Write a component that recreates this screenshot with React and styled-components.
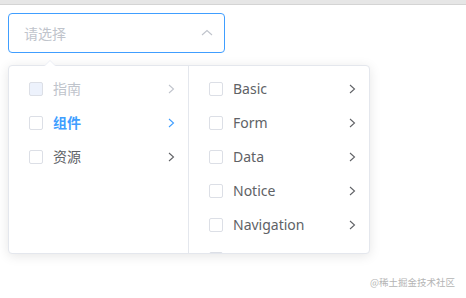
import styled, { createGlobalStyle } from "styled-components";

const GlobalStyle = createGlobalStyle`
  html, body {
    margin: 0;
    padding: 0;
    background: #fff;
  }
  body {
    font-family: "Noto Sans", "Noto Sans CJK SC", sans-serif;
  }
`;

const level1 = [
  { label: "指南", disabled: true },
  { label: "组件", active: true },
  { label: "资源" },
];

const level2 = [
  { label: "Basic" },
  { label: "Form" },
  { label: "Data" },
  { label: "Notice" },
  { label: "Navigation" },
  { label: "" },
];

const Chevron = ({ dir = "right", color }) => (
  <svg width="14" height="14" viewBox="0 0 14 14" fill="none">
    {dir === "right" ? (
      <polyline
        points="5,3 9.5,7 5,11"
        stroke={color}
        strokeWidth="1.1"
        strokeLinejoin="miter"
      />
    ) : (
      <polyline
        points="2,9 7,4.5 12,9"
        stroke={color}
        strokeWidth="1.1"
        strokeLinejoin="miter"
      />
    )}
  </svg>
);

const App = () => {
  return (
    <>
      <GlobalStyle />
      <TopBar />
      <Page>
        <Cascader>
          <Input>
            <Placeholder>请选择</Placeholder>
            <Suffix>
              <Chevron dir="up" color="#c0c4cc" />
            </Suffix>
          </Input>
          <Panel>
            <PopArrow />
            <Menu>
              {level1.map((n) => (
                <Node key={n.label} $active={n.active} $disabled={n.disabled}>
                  <Checkbox $disabled={n.disabled} />
                  <Label>{n.label}</Label>
                  <Postfix>
                    <Chevron
                      color={
                        n.disabled ? "#c0c4cc" : n.active ? "#409eff" : "#606266"
                      }
                    />
                  </Postfix>
                </Node>
              ))}
            </Menu>
            <Menu>
              {level2.map((n, i) => (
                <Node key={i}>
                  <Checkbox />
                  <Label>{n.label}</Label>
                  <Postfix>
                    <Chevron color="#606266" />
                  </Postfix>
                </Node>
              ))}
            </Menu>
          </Panel>
        </Cascader>
      </Page>
      <Watermark>@稀土掘金技术社区</Watermark>
    </>
  );
};

export default App;

const TopBar = styled.div`
  height: 4px;
  background: #e6e6e6;
  border-bottom: 1px solid #d4d4d4;
`;

const Page = styled.div`
  padding: 8px 8px 0;
  height: 293px;
  box-sizing: border-box;
`;

const Cascader = styled.div`
  position: relative;
  width: 217px;
`;

const Input = styled.div`
  display: flex;
  align-items: center;
  justify-content: space-between;
  height: 40px;
  box-sizing: border-box;
  border: 1px solid #409eff;
  border-radius: 4px;
  padding: 0 5px 0 15px;
`;

const Placeholder = styled.span`
  font-family: "Noto Sans CJK SC", sans-serif;
  font-size: 14px;
  color: #c0c4cc;
`;

const Suffix = styled.span`
  width: 25px;
  display: flex;
  justify-content: center;
  align-items: center;
`;

const Panel = styled.div`
  position: absolute;
  top: 52px;
  left: 0;
  display: flex;
  background: #fff;
  border: 1px solid #e4e7ed;
  border-radius: 4px;
  box-shadow: 0 2px 12px rgba(0, 0, 0, 0.1);
`;

const PopArrow = styled.span`
  position: absolute;
  top: -6px;
  left: 35px;
  width: 0;
  height: 0;
  border-left: 6px solid transparent;
  border-right: 6px solid transparent;
  border-bottom: 6px solid #ebeef5;

  &::after {
    content: "";
    position: absolute;
    top: 1px;
    left: -6px;
    border-left: 6px solid transparent;
    border-right: 6px solid transparent;
    border-bottom: 6px solid #fff;
  }
`;

const Menu = styled.ul`
  list-style: none;
  margin: 0;
  padding: 6px 0 0;
  width: 180px;
  height: 187px;
  box-sizing: border-box;
  overflow: hidden;
  border-right: 1px solid #e4e7ed;

  &:last-of-type {
    border-right: none;
  }
`;

const Node = styled.li`
  position: relative;
  display: flex;
  align-items: center;
  height: 34px;
  padding: 0 30px 0 20px;
  font-size: 14px;
  color: ${({ $active, $disabled }) =>
    $disabled ? "#c0c4cc" : $active ? "#409eff" : "#606266"};
  font-weight: ${({ $active }) => ($active ? 700 : 400)};
`;

const Checkbox = styled.span`
  flex: none;
  width: 14px;
  height: 14px;
  box-sizing: border-box;
  border: 1px solid #dcdfe6;
  border-radius: 2px;
  background: ${({ $disabled }) => ($disabled ? "#edf2fc" : "#fff")};
`;

const Label = styled.span`
  flex: 1;
  padding: 0 10px;
  margin-top: -2px;
  white-space: nowrap;
`;

const Postfix = styled.span`
  position: absolute;
  right: 10px;
  top: 50%;
  margin-top: -7px;
  display: flex;
`;

const Watermark = styled.div`
  position: absolute;
  right: 11px;
  top: 275px;
  font-family: "Noto Sans CJK SC", sans-serif;
  font-size: 9.5px;
  color: #b4b4b4;
`;
